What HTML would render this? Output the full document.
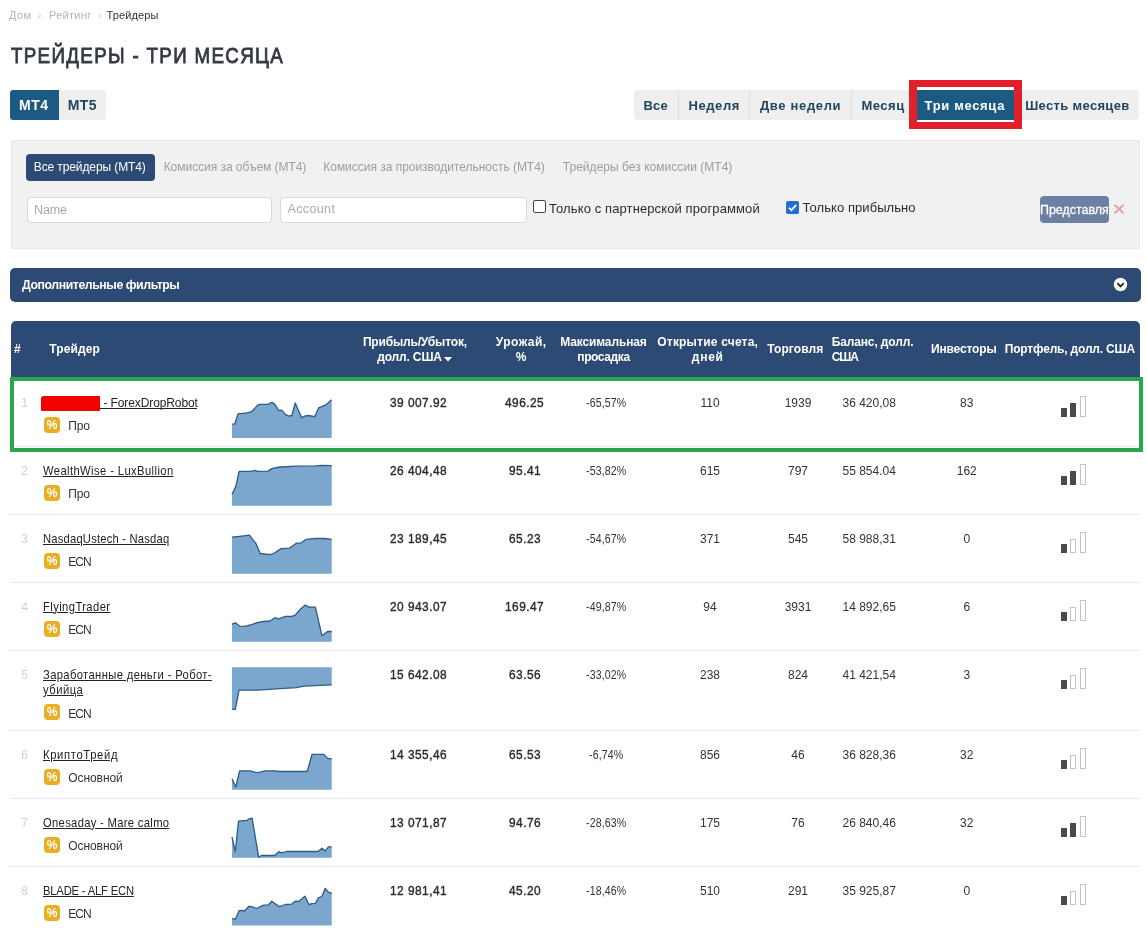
<!DOCTYPE html>
<html><head><meta charset="utf-8"><style>
html,body{margin:0;padding:0;background:#fff;width:1147px;height:932px;overflow:hidden;position:relative}
span{font-family:"Liberation Sans",sans-serif;white-space:pre}
#wrap{position:absolute;left:0;top:0;width:1147px;height:932px;will-change:transform;background:#fff}
</style></head><body><div id="wrap">
<div style="position:absolute;left:10px;top:90px;width:49px;height:30px;background:#1c5a81;border-radius:3px 0 0 3px"></div>
<div style="position:absolute;left:59px;top:90px;width:47px;height:30px;background:#efefef;border-radius:0 3px 3px 0"></div>
<div style="position:absolute;left:634px;top:90px;width:505px;height:29.5px;background:#efefef;border-radius:3px"></div>
<div style="position:absolute;left:678px;top:90px;width:1px;height:29.5px;background:#dfdfdf"></div>
<div style="position:absolute;left:749px;top:90px;width:1px;height:29.5px;background:#dfdfdf"></div>
<div style="position:absolute;left:851px;top:90px;width:1px;height:29.5px;background:#dfdfdf"></div>
<div style="position:absolute;left:913px;top:90px;width:1px;height:29.5px;background:#dfdfdf"></div>
<div style="position:absolute;left:909px;top:80px;width:113px;height:48.5px;background:#e2202b"></div>
<div style="position:absolute;left:917px;top:87px;width:97px;height:35px;background:#fff"></div>
<div style="position:absolute;left:917px;top:90px;width:97px;height:29.5px;background:#1c5a81"></div>
<div style="position:absolute;left:10.5px;top:139.5px;width:1129.0px;height:109.5px;background:#f1f1f1;border:1px solid #e9e9e9;box-sizing:border-box"></div>
<div style="position:absolute;left:26px;top:154px;width:129px;height:27px;background:#2c4a74;border-radius:4px"></div>
<div style="position:absolute;left:26.5px;top:196.5px;width:245.5px;height:26.0px;background:#fff;border:1px solid #d9d9d9;border-radius:4px;box-sizing:border-box"></div>
<div style="position:absolute;left:279.5px;top:196.5px;width:247.0px;height:26.0px;background:#fff;border:1px solid #d9d9d9;border-radius:4px;box-sizing:border-box"></div>
<div style="position:absolute;left:533px;top:199.7px;width:13px;height:13.0px;background:#fff;border:1px solid #444;border-radius:2px;box-sizing:border-box"></div>
<svg style="position:absolute;left:786px;top:201px" width="13" height="13" viewBox="0 0 13 13"><rect x="0" y="0" width="13" height="13" rx="2" fill="#1f6fd0"/><path d="M3 6.8 L5.4 9.2 L10.2 3.8" stroke="#fff" stroke-width="1.8" fill="none"/></svg>
<div style="position:absolute;left:1040px;top:196px;width:69px;height:26.5px;background:#6b80a2;border-radius:4px;overflow:hidden"><span style="position:absolute;left:-0.5px;top:6.5px;font-family:'Liberation Sans';font-size:13.5px;line-height:13.5px;color:#fff;white-space:nowrap;letter-spacing:0px;-webkit-text-stroke:0.3px #fff;transform:scaleX(0.92);transform-origin:0 0">Представлять</span></div>
<svg style="position:absolute;left:1113px;top:203px" width="12" height="12" viewBox="0 0 12 12"><path d="M1.5 1.8 L10.5 10.2 M10.5 1.8 L1.5 10.2" stroke="#dda5a5" stroke-width="1.9"/></svg>
<div style="position:absolute;left:9.5px;top:268px;width:1131.5px;height:33.5px;background:#2c4a74;border-radius:5px"></div>
<svg style="position:absolute;left:1113px;top:277.3px" width="15" height="15" viewBox="0 0 15 15"><circle cx="7.5" cy="7.5" r="6.7" fill="#fff"/><path d="M4.3 6.2 L7.5 9.4 L10.7 6.2" stroke="#1e2530" stroke-width="1.8" fill="none"/></svg>
<div style="position:absolute;left:10.5px;top:321px;width:1129.5px;height:57px;background:#2c4a73;border-radius:5px 5px 0 0"></div>
<svg style="position:absolute;left:444px;top:357px" width="8" height="5" viewBox="0 0 8 5"><path d="M0 0 L8 0 L4 4.6 Z" fill="#fff"/></svg>
<div style="position:absolute;left:41.3px;top:396.3px;width:58.7px;height:15.0px;background:#f50000;border-radius:3px 1px 1px 1px"></div>
<div style="position:absolute;left:100px;top:407.5px;width:97px;height:1.0px;background:#222"></div>
<div style="position:absolute;left:44px;top:416.5px;width:16px;height:16px;background:#e8ae24;border-radius:4px;color:#fff;font-family:'Liberation Sans';font-weight:bold;font-size:12px;line-height:16px;text-align:center">%</div>
<svg style="position:absolute;left:0;top:0" width="1147" height="932"><polygon points="232.0,437.9 232.0,424.2 234.7,424.2 238.0,413.9 247.2,412.8 251.6,411.7 257.6,405.2 259.8,404.4 268.0,404.4 271.8,402.4 275.0,404.6 278.8,410.6 281.6,410.1 285.4,414.4 288.7,416.1 291.9,415.5 295.2,403.0 301.7,417.7 304.5,416.1 308.3,415.5 314.8,416.6 318.6,407.9 322.4,406.3 326.3,404.6 331.7,399.7 331.7,437.9" fill="#7ba6cd"/><polyline points="232.0,424.2 234.7,424.2 238.0,413.9 247.2,412.8 251.6,411.7 257.6,405.2 259.8,404.4 268.0,404.4 271.8,402.4 275.0,404.6 278.8,410.6 281.6,410.1 285.4,414.4 288.7,416.1 291.9,415.5 295.2,403.0 301.7,417.7 304.5,416.1 308.3,415.5 314.8,416.6 318.6,407.9 322.4,406.3 326.3,404.6 331.7,399.7" fill="none" stroke="#2f5b85" stroke-width="1.3" stroke-linejoin="round"/></svg>
<div style="position:absolute;left:1061px;top:408px;width:6px;height:8.5px;background:#4a4a4a"></div>
<div style="position:absolute;left:1070px;top:402.5px;width:6px;height:14px;background:#4a4a4a"></div>
<div style="position:absolute;left:1079.5px;top:396px;width:6px;height:20.5px;border:1px solid #c4c4c4;box-sizing:border-box"></div>
<div style="position:absolute;left:10px;top:446px;width:1130px;height:1px;background:#e9e9e9"></div>
<div style="position:absolute;left:44px;top:484.5px;width:16px;height:16px;background:#e8ae24;border-radius:4px;color:#fff;font-family:'Liberation Sans';font-weight:bold;font-size:12px;line-height:16px;text-align:center">%</div>
<svg style="position:absolute;left:0;top:0" width="1147" height="932"><polygon points="232.0,505.7 232.0,494.2 235.8,486.6 239.1,471.3 251.6,471.3 254.9,470.3 257.6,471.3 268.0,471.1 271.8,468.6 279.9,467.0 296.3,466.2 315.9,465.9 321.4,465.4 331.7,465.6 331.7,505.7" fill="#7ba6cd"/><polyline points="232.0,494.2 235.8,486.6 239.1,471.3 251.6,471.3 254.9,470.3 257.6,471.3 268.0,471.1 271.8,468.6 279.9,467.0 296.3,466.2 315.9,465.9 321.4,465.4 331.7,465.6" fill="none" stroke="#2f5b85" stroke-width="1.3" stroke-linejoin="round"/></svg>
<div style="position:absolute;left:1061px;top:476px;width:6px;height:8.5px;background:#4a4a4a"></div>
<div style="position:absolute;left:1070px;top:470.5px;width:6px;height:14px;background:#4a4a4a"></div>
<div style="position:absolute;left:1079.5px;top:464px;width:6px;height:20.5px;border:1px solid #c4c4c4;box-sizing:border-box"></div>
<div style="position:absolute;left:10px;top:514px;width:1130px;height:1px;background:#e9e9e9"></div>
<div style="position:absolute;left:44px;top:552.5px;width:16px;height:16px;background:#e8ae24;border-radius:4px;color:#fff;font-family:'Liberation Sans';font-weight:bold;font-size:12px;line-height:16px;text-align:center">%</div>
<svg style="position:absolute;left:0;top:0" width="1147" height="932"><polygon points="232.0,573.7 232.0,537.2 241.8,536.1 249.4,535.2 256.0,543.7 260.3,553.5 270.1,554.6 274.5,553.0 281.0,548.6 289.7,548.1 296.3,543.2 300.6,543.2 306.1,539.3 315.9,538.3 324.6,538.5 331.7,539.3 331.7,573.7" fill="#7ba6cd"/><polyline points="232.0,537.2 241.8,536.1 249.4,535.2 256.0,543.7 260.3,553.5 270.1,554.6 274.5,553.0 281.0,548.6 289.7,548.1 296.3,543.2 300.6,543.2 306.1,539.3 315.9,538.3 324.6,538.5 331.7,539.3" fill="none" stroke="#2f5b85" stroke-width="1.3" stroke-linejoin="round"/></svg>
<div style="position:absolute;left:1061px;top:544px;width:6px;height:8.5px;background:#4a4a4a"></div>
<div style="position:absolute;left:1070px;top:538.5px;width:6px;height:14px;border:1px solid #c4c4c4;box-sizing:border-box"></div>
<div style="position:absolute;left:1079.5px;top:532px;width:6px;height:20.5px;border:1px solid #c4c4c4;box-sizing:border-box"></div>
<div style="position:absolute;left:10px;top:582px;width:1130px;height:1px;background:#e9e9e9"></div>
<div style="position:absolute;left:44px;top:620.5px;width:16px;height:16px;background:#e8ae24;border-radius:4px;color:#fff;font-family:'Liberation Sans';font-weight:bold;font-size:12px;line-height:16px;text-align:center">%</div>
<svg style="position:absolute;left:0;top:0" width="1147" height="932"><polygon points="232.0,641.7 232.0,624.2 235.3,622.8 239.6,626.1 245.1,626.4 250.5,625.0 257.1,622.6 263.6,621.5 270.1,621.0 275.0,617.7 278.8,618.8 285.4,616.3 291.9,616.3 295.2,615.2 300.6,609.0 305.0,605.2 309.4,607.1 315.4,607.1 321.9,635.7 327.9,631.3 331.7,631.5 331.7,641.7" fill="#7ba6cd"/><polyline points="232.0,624.2 235.3,622.8 239.6,626.1 245.1,626.4 250.5,625.0 257.1,622.6 263.6,621.5 270.1,621.0 275.0,617.7 278.8,618.8 285.4,616.3 291.9,616.3 295.2,615.2 300.6,609.0 305.0,605.2 309.4,607.1 315.4,607.1 321.9,635.7 327.9,631.3 331.7,631.5" fill="none" stroke="#2f5b85" stroke-width="1.3" stroke-linejoin="round"/></svg>
<div style="position:absolute;left:1061px;top:612px;width:6px;height:8.5px;background:#4a4a4a"></div>
<div style="position:absolute;left:1070px;top:606.5px;width:6px;height:14px;border:1px solid #c4c4c4;box-sizing:border-box"></div>
<div style="position:absolute;left:1079.5px;top:600px;width:6px;height:20.5px;border:1px solid #c4c4c4;box-sizing:border-box"></div>
<div style="position:absolute;left:10px;top:650px;width:1130px;height:1px;background:#e9e9e9"></div>
<div style="position:absolute;left:44px;top:704.2px;width:16px;height:16px;background:#e8ae24;border-radius:4px;color:#fff;font-family:'Liberation Sans';font-weight:bold;font-size:12px;line-height:16px;text-align:center">%</div>
<svg style="position:absolute;left:0;top:0" width="1147" height="932"><polygon points="232.0,667.2 232.0,709.3 235.3,709.3 239.1,690.1 258.1,690.1 279.9,688.6 296.3,687.6 303.9,686.2 320.3,685.4 331.7,684.9 331.7,667.2" fill="#7ba6cd"/><polyline points="232.0,709.3 235.3,709.3 239.1,690.1 258.1,690.1 279.9,688.6 296.3,687.6 303.9,686.2 320.3,685.4 331.7,684.9" fill="none" stroke="#2f5b85" stroke-width="1.3" stroke-linejoin="round"/></svg>
<div style="position:absolute;left:1061px;top:680px;width:6px;height:8.5px;background:#4a4a4a"></div>
<div style="position:absolute;left:1070px;top:674.5px;width:6px;height:14px;border:1px solid #c4c4c4;box-sizing:border-box"></div>
<div style="position:absolute;left:1079.5px;top:668px;width:6px;height:20.5px;border:1px solid #c4c4c4;box-sizing:border-box"></div>
<div style="position:absolute;left:10px;top:730px;width:1130px;height:1px;background:#e9e9e9"></div>
<div style="position:absolute;left:44px;top:768.5px;width:16px;height:16px;background:#e8ae24;border-radius:4px;color:#fff;font-family:'Liberation Sans';font-weight:bold;font-size:12px;line-height:16px;text-align:center">%</div>
<svg style="position:absolute;left:0;top:0" width="1147" height="932"><polygon points="232.0,789.7 232.0,778.8 235.8,787.0 239.6,770.8 250.5,770.8 256.0,772.6 260.3,772.2 264.7,770.8 274.5,770.8 279.9,771.5 307.2,771.5 312.1,754.3 323.5,754.3 327.9,758.6 331.7,758.6 331.7,789.7" fill="#7ba6cd"/><polyline points="232.0,778.8 235.8,787.0 239.6,770.8 250.5,770.8 256.0,772.6 260.3,772.2 264.7,770.8 274.5,770.8 279.9,771.5 307.2,771.5 312.1,754.3 323.5,754.3 327.9,758.6 331.7,758.6" fill="none" stroke="#2f5b85" stroke-width="1.3" stroke-linejoin="round"/></svg>
<div style="position:absolute;left:1061px;top:760px;width:6px;height:8.5px;background:#4a4a4a"></div>
<div style="position:absolute;left:1070px;top:754.5px;width:6px;height:14px;border:1px solid #c4c4c4;box-sizing:border-box"></div>
<div style="position:absolute;left:1079.5px;top:748px;width:6px;height:20.5px;border:1px solid #c4c4c4;box-sizing:border-box"></div>
<div style="position:absolute;left:10px;top:798px;width:1130px;height:1px;background:#e9e9e9"></div>
<div style="position:absolute;left:44px;top:836.5px;width:16px;height:16px;background:#e8ae24;border-radius:4px;color:#fff;font-family:'Liberation Sans';font-weight:bold;font-size:12px;line-height:16px;text-align:center">%</div>
<svg style="position:absolute;left:0;top:0" width="1147" height="932"><polygon points="232.0,857.7 232.0,837.0 235.3,851.7 238.5,821.2 247.2,820.3 248.9,819.0 252.1,818.1 258.7,857.3 261.4,855.5 274.5,855.5 278.8,851.7 282.1,852.8 286.5,851.5 318.1,851.5 321.9,848.2 325.2,851.1 328.4,846.8 331.7,846.8 331.7,857.7" fill="#7ba6cd"/><polyline points="232.0,837.0 235.3,851.7 238.5,821.2 247.2,820.3 248.9,819.0 252.1,818.1 258.7,857.3 261.4,855.5 274.5,855.5 278.8,851.7 282.1,852.8 286.5,851.5 318.1,851.5 321.9,848.2 325.2,851.1 328.4,846.8 331.7,846.8" fill="none" stroke="#2f5b85" stroke-width="1.3" stroke-linejoin="round"/></svg>
<div style="position:absolute;left:1061px;top:828px;width:6px;height:8.5px;background:#4a4a4a"></div>
<div style="position:absolute;left:1070px;top:822.5px;width:6px;height:14px;background:#4a4a4a"></div>
<div style="position:absolute;left:1079.5px;top:816px;width:6px;height:20.5px;border:1px solid #c4c4c4;box-sizing:border-box"></div>
<div style="position:absolute;left:10px;top:866px;width:1130px;height:1px;background:#e9e9e9"></div>
<div style="position:absolute;left:44px;top:904.5px;width:16px;height:16px;background:#e8ae24;border-radius:4px;color:#fff;font-family:'Liberation Sans';font-weight:bold;font-size:12px;line-height:16px;text-align:center">%</div>
<svg style="position:absolute;left:0;top:0" width="1147" height="932"><polygon points="232.0,925.6 232.0,918.3 235.3,919.4 239.1,910.7 241.8,910.4 244.5,911.0 248.9,906.3 251.6,906.7 256.5,908.5 263.6,905.2 268.0,905.2 271.8,901.2 279.4,906.7 285.4,904.5 291.9,904.1 295.2,901.2 298.5,901.4 305.0,896.2 308.8,904.5 312.1,903.6 315.4,903.4 318.6,897.6 321.9,896.5 325.2,888.3 328.4,892.2 331.7,893.3 331.7,925.6" fill="#7ba6cd"/><polyline points="232.0,918.3 235.3,919.4 239.1,910.7 241.8,910.4 244.5,911.0 248.9,906.3 251.6,906.7 256.5,908.5 263.6,905.2 268.0,905.2 271.8,901.2 279.4,906.7 285.4,904.5 291.9,904.1 295.2,901.2 298.5,901.4 305.0,896.2 308.8,904.5 312.1,903.6 315.4,903.4 318.6,897.6 321.9,896.5 325.2,888.3 328.4,892.2 331.7,893.3" fill="none" stroke="#2f5b85" stroke-width="1.3" stroke-linejoin="round"/></svg>
<div style="position:absolute;left:1061px;top:896px;width:6px;height:8.5px;background:#4a4a4a"></div>
<div style="position:absolute;left:1070px;top:890.5px;width:6px;height:14px;border:1px solid #c4c4c4;box-sizing:border-box"></div>
<div style="position:absolute;left:1079.5px;top:884px;width:6px;height:20.5px;border:1px solid #c4c4c4;box-sizing:border-box"></div>
<div style="position:absolute;left:9.5px;top:376.8px;width:1133.5px;height:75.69999999999999px;border:4.7px solid #2ba64b;border-bottom-width:4.5px;box-sizing:border-box"></div>
<span style="position:absolute;left:8.94px;top:9.89px;font-size:11px;line-height:11px;font-weight:normal;color:#b4b4b4;letter-spacing:0.485px;">Дом</span>
<span style="position:absolute;left:37.84px;top:9.89px;font-size:11px;line-height:11px;font-weight:normal;color:#c8c8c8;letter-spacing:1.148px;">›</span>
<span style="position:absolute;left:49.04px;top:9.89px;font-size:11px;line-height:11px;font-weight:normal;color:#b4b4b4;letter-spacing:0.276px;">Рейтинг</span>
<span style="position:absolute;left:97.84px;top:9.89px;font-size:11px;line-height:11px;font-weight:normal;color:#c8c8c8;letter-spacing:1.148px;">›</span>
<span style="position:absolute;left:106.54px;top:9.89px;font-size:11px;line-height:11px;font-weight:normal;color:#333;letter-spacing:0.109px;">Трейдеры</span>
<span style="position:absolute;left:10.69px;top:45.35px;font-size:21.8px;line-height:21.8px;font-weight:normal;color:#343a42;letter-spacing:1.552px;-webkit-text-stroke:0.85px #343a42;transform:scaleX(0.86);transform-origin:0 0">ТРЕЙДЕРЫ - ТРИ МЕСЯЦА</span>
<span style="position:absolute;left:19.06px;top:97.95px;font-size:14px;line-height:14px;font-weight:bold;color:#fff;letter-spacing:0.460px;">MT4</span>
<span style="position:absolute;left:67.66px;top:97.95px;font-size:14px;line-height:14px;font-weight:bold;color:#21465f;letter-spacing:0.493px;">MT5</span>
<span style="position:absolute;left:643.52px;top:99.00px;font-size:13px;line-height:13px;font-weight:bold;color:#21465f;letter-spacing:0.134px;">Все</span>
<span style="position:absolute;left:688.52px;top:99.00px;font-size:13px;line-height:13px;font-weight:bold;color:#21465f;letter-spacing:0.568px;">Неделя</span>
<span style="position:absolute;left:759.92px;top:99.00px;font-size:13px;line-height:13px;font-weight:bold;color:#21465f;letter-spacing:0.661px;">Две недели</span>
<span style="position:absolute;left:861.42px;top:99.00px;font-size:13px;line-height:13px;font-weight:bold;color:#21465f;letter-spacing:0.511px;">Месяц</span>
<span style="position:absolute;left:1025.22px;top:99.00px;font-size:13px;line-height:13px;font-weight:bold;color:#21465f;letter-spacing:0.333px;">Шесть месяцев</span>
<span style="position:absolute;left:924.52px;top:99.00px;font-size:13px;line-height:13px;font-weight:bold;color:#fff;letter-spacing:0.669px;">Три месяца</span>
<span style="position:absolute;left:33.78px;top:161.14px;font-size:12px;line-height:12px;font-weight:normal;color:#fff;letter-spacing:-0.107px;">Все трейдеры (MT4)</span>
<span style="position:absolute;left:163.68px;top:160.54px;font-size:12px;line-height:12px;font-weight:normal;color:#9d9d9d;letter-spacing:-0.040px;">Комиссия за объем (MT4)</span>
<span style="position:absolute;left:323.28px;top:160.54px;font-size:12px;line-height:12px;font-weight:normal;color:#9d9d9d;letter-spacing:-0.022px;">Комиссия за производительность (MT4)</span>
<span style="position:absolute;left:562.78px;top:160.54px;font-size:12px;line-height:12px;font-weight:normal;color:#9d9d9d;letter-spacing:0.033px;">Трейдеры без комиссии (MT4)</span>
<span style="position:absolute;left:34.05px;top:203.52px;font-size:12.5px;line-height:12.5px;font-weight:normal;color:#a8a8a8;letter-spacing:-0.161px;">Name</span>
<span style="position:absolute;left:287.45px;top:203.42px;font-size:12.5px;line-height:12.5px;font-weight:normal;color:#a8a8a8;letter-spacing:0.375px;">Account</span>
<span style="position:absolute;left:549.02px;top:201.70px;font-size:13px;line-height:13px;font-weight:normal;color:#2b2b2b;letter-spacing:0.111px;">Только с партнерской программой</span>
<span style="position:absolute;left:802.52px;top:200.60px;font-size:13px;line-height:13px;font-weight:normal;color:#2b2b2b;letter-spacing:0.073px;">Только прибыльно</span>
<span style="position:absolute;left:21.96px;top:279.19px;font-size:12.3px;line-height:12.3px;font-weight:bold;color:#fff;letter-spacing:-0.429px;">Дополнительные фильтры</span>
<span style="position:absolute;left:14.08px;top:343.44px;font-size:12px;line-height:12px;font-weight:bold;color:#fff;letter-spacing:1.752px;">#</span>
<span style="position:absolute;left:49.28px;top:343.44px;font-size:12px;line-height:12px;font-weight:bold;color:#fff;letter-spacing:0.109px;">Трейдер</span>
<span style="position:absolute;left:362.88px;top:336.24px;font-size:12px;line-height:12px;font-weight:bold;color:#fff;letter-spacing:-0.167px;">Прибыль/Убыток,</span>
<span style="position:absolute;left:377.18px;top:351.34px;font-size:12px;line-height:12px;font-weight:bold;color:#fff;letter-spacing:-0.146px;">долл. США</span>
<span style="position:absolute;left:495.78px;top:336.24px;font-size:12px;line-height:12px;font-weight:bold;color:#fff;letter-spacing:0.468px;">Урожай,</span>
<span style="position:absolute;left:515.78px;top:351.34px;font-size:12px;line-height:12px;font-weight:bold;color:#fff;letter-spacing:0.268px;">%</span>
<span style="position:absolute;left:560.18px;top:336.24px;font-size:12px;line-height:12px;font-weight:bold;color:#fff;letter-spacing:-0.124px;">Максимальная</span>
<span style="position:absolute;left:577.28px;top:351.34px;font-size:12px;line-height:12px;font-weight:bold;color:#fff;letter-spacing:-0.388px;">просадка</span>
<span style="position:absolute;left:657.28px;top:336.24px;font-size:12px;line-height:12px;font-weight:bold;color:#fff;letter-spacing:0.203px;">Открытие счета,</span>
<span style="position:absolute;left:691.78px;top:351.34px;font-size:12px;line-height:12px;font-weight:bold;color:#fff;letter-spacing:0.755px;">дней</span>
<span style="position:absolute;left:767.28px;top:343.44px;font-size:12px;line-height:12px;font-weight:bold;color:#fff;letter-spacing:0.111px;">Торговля</span>
<span style="position:absolute;left:831.68px;top:336.24px;font-size:12px;line-height:12px;font-weight:bold;color:#fff;letter-spacing:-0.129px;">Баланс, долл.</span>
<span style="position:absolute;left:831.68px;top:351.34px;font-size:12px;line-height:12px;font-weight:bold;color:#fff;letter-spacing:-1.117px;">США</span>
<span style="position:absolute;left:930.98px;top:343.44px;font-size:12px;line-height:12px;font-weight:bold;color:#fff;letter-spacing:-0.154px;">Инвесторы</span>
<span style="position:absolute;left:1004.78px;top:343.44px;font-size:12px;line-height:12px;font-weight:bold;color:#fff;letter-spacing:-0.184px;">Портфель, долл. США</span>
<span style="position:absolute;left:21.28px;top:396.84px;font-size:12px;line-height:12px;font-weight:normal;color:#d0d0d0;letter-spacing:-0.248px;">1</span>
<span style="position:absolute;left:103.48px;top:396.84px;font-size:12px;line-height:12px;font-weight:normal;color:#222;letter-spacing:-0.107px;">- ForexDropRobot</span>
<span style="position:absolute;left:68.28px;top:420.34px;font-size:12px;line-height:12px;font-weight:normal;color:#333;letter-spacing:-0.181px;">Про</span>
<span style="position:absolute;left:389.93px;top:396.96px;font-size:12.8px;line-height:12.8px;font-weight:normal;color:#2b2b2b;letter-spacing:0.500px;-webkit-text-stroke:0.38px #2b2b2b;transform:scaleX(0.93);transform-origin:0 0">39 007.92</span>
<span style="position:absolute;left:505.10px;top:396.96px;font-size:12.8px;line-height:12.8px;font-weight:normal;color:#2b2b2b;letter-spacing:0.500px;-webkit-text-stroke:0.38px #2b2b2b;transform:scaleX(0.93);transform-origin:0 0">496.25</span>
<span style="position:absolute;left:585.87px;top:397.14px;font-size:12px;line-height:12px;font-weight:normal;color:#333;letter-spacing:0.150px;;transform:scaleX(0.88);transform-origin:0 0">-65,57%</span>
<span style="position:absolute;left:700.43px;top:396.84px;font-size:12px;line-height:12px;font-weight:normal;color:#333;letter-spacing:0.000px;">110</span>
<span style="position:absolute;left:784.65px;top:396.84px;font-size:12px;line-height:12px;font-weight:normal;color:#333;letter-spacing:0.000px;">1939</span>
<span style="position:absolute;left:842.48px;top:396.84px;font-size:12px;line-height:12px;font-weight:normal;color:#333;letter-spacing:0.000px;">36 420,08</span>
<span style="position:absolute;left:960.12px;top:396.84px;font-size:12px;line-height:12px;font-weight:normal;color:#333;letter-spacing:0.000px;">83</span>
<span style="position:absolute;left:21.28px;top:464.84px;font-size:12px;line-height:12px;font-weight:normal;color:#d0d0d0;letter-spacing:-0.248px;">2</span>
<span style="position:absolute;left:43.47px;top:464.67px;font-size:12.2px;line-height:12.2px;font-weight:normal;color:#222;letter-spacing:0.437px;text-decoration:underline;text-underline-offset:1px;transform:scaleX(0.92);transform-origin:0 0">WealthWise - LuxBullion</span>
<span style="position:absolute;left:68.28px;top:488.34px;font-size:12px;line-height:12px;font-weight:normal;color:#333;letter-spacing:-0.181px;">Про</span>
<span style="position:absolute;left:389.93px;top:464.96px;font-size:12.8px;line-height:12.8px;font-weight:normal;color:#2b2b2b;letter-spacing:0.500px;-webkit-text-stroke:0.38px #2b2b2b;transform:scaleX(0.93);transform-origin:0 0">26 404,48</span>
<span style="position:absolute;left:508.64px;top:464.96px;font-size:12.8px;line-height:12.8px;font-weight:normal;color:#2b2b2b;letter-spacing:0.500px;-webkit-text-stroke:0.38px #2b2b2b;transform:scaleX(0.93);transform-origin:0 0">95.41</span>
<span style="position:absolute;left:585.87px;top:465.14px;font-size:12px;line-height:12px;font-weight:normal;color:#333;letter-spacing:0.150px;;transform:scaleX(0.88);transform-origin:0 0">-53,82%</span>
<span style="position:absolute;left:699.98px;top:464.84px;font-size:12px;line-height:12px;font-weight:normal;color:#333;letter-spacing:0.000px;">615</span>
<span style="position:absolute;left:787.98px;top:464.84px;font-size:12px;line-height:12px;font-weight:normal;color:#333;letter-spacing:0.000px;">797</span>
<span style="position:absolute;left:842.48px;top:464.84px;font-size:12px;line-height:12px;font-weight:normal;color:#333;letter-spacing:0.000px;">55 854.04</span>
<span style="position:absolute;left:956.78px;top:464.84px;font-size:12px;line-height:12px;font-weight:normal;color:#333;letter-spacing:0.000px;">162</span>
<span style="position:absolute;left:21.28px;top:532.84px;font-size:12px;line-height:12px;font-weight:normal;color:#d0d0d0;letter-spacing:-0.248px;">3</span>
<span style="position:absolute;left:43.47px;top:532.67px;font-size:12.2px;line-height:12.2px;font-weight:normal;color:#222;letter-spacing:0.218px;text-decoration:underline;text-underline-offset:1px;transform:scaleX(0.92);transform-origin:0 0">NasdaqUstech - Nasdaq</span>
<span style="position:absolute;left:68.28px;top:556.34px;font-size:12px;line-height:12px;font-weight:normal;color:#333;letter-spacing:-0.968px;">ECN</span>
<span style="position:absolute;left:389.93px;top:532.96px;font-size:12.8px;line-height:12.8px;font-weight:normal;color:#2b2b2b;letter-spacing:0.500px;-webkit-text-stroke:0.38px #2b2b2b;transform:scaleX(0.93);transform-origin:0 0">23 189,45</span>
<span style="position:absolute;left:508.64px;top:532.96px;font-size:12.8px;line-height:12.8px;font-weight:normal;color:#2b2b2b;letter-spacing:0.500px;-webkit-text-stroke:0.38px #2b2b2b;transform:scaleX(0.93);transform-origin:0 0">65.23</span>
<span style="position:absolute;left:585.87px;top:533.14px;font-size:12px;line-height:12px;font-weight:normal;color:#333;letter-spacing:0.150px;;transform:scaleX(0.88);transform-origin:0 0">-54,67%</span>
<span style="position:absolute;left:699.98px;top:532.84px;font-size:12px;line-height:12px;font-weight:normal;color:#333;letter-spacing:0.000px;">371</span>
<span style="position:absolute;left:787.98px;top:532.84px;font-size:12px;line-height:12px;font-weight:normal;color:#333;letter-spacing:0.000px;">545</span>
<span style="position:absolute;left:842.48px;top:532.84px;font-size:12px;line-height:12px;font-weight:normal;color:#333;letter-spacing:0.000px;">58 988,31</span>
<span style="position:absolute;left:963.46px;top:532.84px;font-size:12px;line-height:12px;font-weight:normal;color:#333;letter-spacing:0.000px;">0</span>
<span style="position:absolute;left:21.28px;top:600.84px;font-size:12px;line-height:12px;font-weight:normal;color:#d0d0d0;letter-spacing:-0.248px;">4</span>
<span style="position:absolute;left:43.47px;top:600.67px;font-size:12.2px;line-height:12.2px;font-weight:normal;color:#222;letter-spacing:0.447px;text-decoration:underline;text-underline-offset:1px;transform:scaleX(0.92);transform-origin:0 0">FlyingTrader</span>
<span style="position:absolute;left:68.28px;top:624.34px;font-size:12px;line-height:12px;font-weight:normal;color:#333;letter-spacing:-0.968px;">ECN</span>
<span style="position:absolute;left:389.93px;top:600.96px;font-size:12.8px;line-height:12.8px;font-weight:normal;color:#2b2b2b;letter-spacing:0.500px;-webkit-text-stroke:0.38px #2b2b2b;transform:scaleX(0.93);transform-origin:0 0">20 943.07</span>
<span style="position:absolute;left:505.10px;top:600.96px;font-size:12.8px;line-height:12.8px;font-weight:normal;color:#2b2b2b;letter-spacing:0.500px;-webkit-text-stroke:0.38px #2b2b2b;transform:scaleX(0.93);transform-origin:0 0">169.47</span>
<span style="position:absolute;left:585.87px;top:601.14px;font-size:12px;line-height:12px;font-weight:normal;color:#333;letter-spacing:0.150px;;transform:scaleX(0.88);transform-origin:0 0">-49,87%</span>
<span style="position:absolute;left:703.32px;top:600.84px;font-size:12px;line-height:12px;font-weight:normal;color:#333;letter-spacing:0.000px;">94</span>
<span style="position:absolute;left:784.65px;top:600.84px;font-size:12px;line-height:12px;font-weight:normal;color:#333;letter-spacing:0.000px;">3931</span>
<span style="position:absolute;left:842.48px;top:600.84px;font-size:12px;line-height:12px;font-weight:normal;color:#333;letter-spacing:0.000px;">14 892,65</span>
<span style="position:absolute;left:963.46px;top:600.84px;font-size:12px;line-height:12px;font-weight:normal;color:#333;letter-spacing:0.000px;">6</span>
<span style="position:absolute;left:21.28px;top:668.84px;font-size:12px;line-height:12px;font-weight:normal;color:#d0d0d0;letter-spacing:-0.248px;">5</span>
<span style="position:absolute;left:43.47px;top:668.67px;font-size:12.2px;line-height:12.2px;font-weight:normal;color:#222;letter-spacing:0.403px;text-decoration:underline;text-underline-offset:1px;transform:scaleX(0.92);transform-origin:0 0">Заработанные деньги - Робот-</span>
<span style="position:absolute;left:43.47px;top:684.37px;font-size:12.2px;line-height:12.2px;font-weight:normal;color:#222;letter-spacing:0.529px;text-decoration:underline;text-underline-offset:1px;transform:scaleX(0.92);transform-origin:0 0">убийца</span>
<span style="position:absolute;left:68.28px;top:708.04px;font-size:12px;line-height:12px;font-weight:normal;color:#333;letter-spacing:-0.968px;">ECN</span>
<span style="position:absolute;left:389.93px;top:668.96px;font-size:12.8px;line-height:12.8px;font-weight:normal;color:#2b2b2b;letter-spacing:0.500px;-webkit-text-stroke:0.38px #2b2b2b;transform:scaleX(0.93);transform-origin:0 0">15 642.08</span>
<span style="position:absolute;left:508.64px;top:668.96px;font-size:12.8px;line-height:12.8px;font-weight:normal;color:#2b2b2b;letter-spacing:0.500px;-webkit-text-stroke:0.38px #2b2b2b;transform:scaleX(0.93);transform-origin:0 0">63.56</span>
<span style="position:absolute;left:585.87px;top:669.14px;font-size:12px;line-height:12px;font-weight:normal;color:#333;letter-spacing:0.150px;;transform:scaleX(0.88);transform-origin:0 0">-33,02%</span>
<span style="position:absolute;left:699.98px;top:668.84px;font-size:12px;line-height:12px;font-weight:normal;color:#333;letter-spacing:0.000px;">238</span>
<span style="position:absolute;left:787.98px;top:668.84px;font-size:12px;line-height:12px;font-weight:normal;color:#333;letter-spacing:0.000px;">824</span>
<span style="position:absolute;left:842.48px;top:668.84px;font-size:12px;line-height:12px;font-weight:normal;color:#333;letter-spacing:0.000px;">41 421,54</span>
<span style="position:absolute;left:963.46px;top:668.84px;font-size:12px;line-height:12px;font-weight:normal;color:#333;letter-spacing:0.000px;">3</span>
<span style="position:absolute;left:21.28px;top:748.84px;font-size:12px;line-height:12px;font-weight:normal;color:#d0d0d0;letter-spacing:-0.248px;">6</span>
<span style="position:absolute;left:43.47px;top:748.67px;font-size:12.2px;line-height:12.2px;font-weight:normal;color:#222;letter-spacing:0.723px;text-decoration:underline;text-underline-offset:1px;transform:scaleX(0.92);transform-origin:0 0">КриптоТрейд</span>
<span style="position:absolute;left:68.28px;top:772.34px;font-size:12px;line-height:12px;font-weight:normal;color:#333;letter-spacing:-0.072px;">Основной</span>
<span style="position:absolute;left:389.93px;top:748.96px;font-size:12.8px;line-height:12.8px;font-weight:normal;color:#2b2b2b;letter-spacing:0.500px;-webkit-text-stroke:0.38px #2b2b2b;transform:scaleX(0.93);transform-origin:0 0">14 355,46</span>
<span style="position:absolute;left:508.64px;top:748.96px;font-size:12.8px;line-height:12.8px;font-weight:normal;color:#2b2b2b;letter-spacing:0.500px;-webkit-text-stroke:0.38px #2b2b2b;transform:scaleX(0.93);transform-origin:0 0">65.53</span>
<span style="position:absolute;left:588.87px;top:749.14px;font-size:12px;line-height:12px;font-weight:normal;color:#333;letter-spacing:0.150px;;transform:scaleX(0.88);transform-origin:0 0">-6,74%</span>
<span style="position:absolute;left:699.98px;top:748.84px;font-size:12px;line-height:12px;font-weight:normal;color:#333;letter-spacing:0.000px;">856</span>
<span style="position:absolute;left:791.32px;top:748.84px;font-size:12px;line-height:12px;font-weight:normal;color:#333;letter-spacing:0.000px;">46</span>
<span style="position:absolute;left:842.48px;top:748.84px;font-size:12px;line-height:12px;font-weight:normal;color:#333;letter-spacing:0.000px;">36 828,36</span>
<span style="position:absolute;left:960.12px;top:748.84px;font-size:12px;line-height:12px;font-weight:normal;color:#333;letter-spacing:0.000px;">32</span>
<span style="position:absolute;left:21.28px;top:816.84px;font-size:12px;line-height:12px;font-weight:normal;color:#d0d0d0;letter-spacing:-0.248px;">7</span>
<span style="position:absolute;left:43.47px;top:816.67px;font-size:12.2px;line-height:12.2px;font-weight:normal;color:#222;letter-spacing:0.347px;text-decoration:underline;text-underline-offset:1px;transform:scaleX(0.92);transform-origin:0 0">Onesaday - Mare calmo</span>
<span style="position:absolute;left:68.28px;top:840.34px;font-size:12px;line-height:12px;font-weight:normal;color:#333;letter-spacing:-0.072px;">Основной</span>
<span style="position:absolute;left:389.93px;top:816.96px;font-size:12.8px;line-height:12.8px;font-weight:normal;color:#2b2b2b;letter-spacing:0.500px;-webkit-text-stroke:0.38px #2b2b2b;transform:scaleX(0.93);transform-origin:0 0">13 071,87</span>
<span style="position:absolute;left:508.64px;top:816.96px;font-size:12.8px;line-height:12.8px;font-weight:normal;color:#2b2b2b;letter-spacing:0.500px;-webkit-text-stroke:0.38px #2b2b2b;transform:scaleX(0.93);transform-origin:0 0">94.76</span>
<span style="position:absolute;left:585.87px;top:817.14px;font-size:12px;line-height:12px;font-weight:normal;color:#333;letter-spacing:0.150px;;transform:scaleX(0.88);transform-origin:0 0">-28,63%</span>
<span style="position:absolute;left:699.98px;top:816.84px;font-size:12px;line-height:12px;font-weight:normal;color:#333;letter-spacing:0.000px;">175</span>
<span style="position:absolute;left:791.32px;top:816.84px;font-size:12px;line-height:12px;font-weight:normal;color:#333;letter-spacing:0.000px;">76</span>
<span style="position:absolute;left:842.48px;top:816.84px;font-size:12px;line-height:12px;font-weight:normal;color:#333;letter-spacing:0.000px;">26 840,46</span>
<span style="position:absolute;left:960.12px;top:816.84px;font-size:12px;line-height:12px;font-weight:normal;color:#333;letter-spacing:0.000px;">32</span>
<span style="position:absolute;left:21.28px;top:884.84px;font-size:12px;line-height:12px;font-weight:normal;color:#d0d0d0;letter-spacing:-0.248px;">8</span>
<span style="position:absolute;left:43.47px;top:884.67px;font-size:12.2px;line-height:12.2px;font-weight:normal;color:#222;letter-spacing:-0.189px;text-decoration:underline;text-underline-offset:1px;transform:scaleX(0.92);transform-origin:0 0">BLADE - ALF ECN</span>
<span style="position:absolute;left:68.28px;top:908.34px;font-size:12px;line-height:12px;font-weight:normal;color:#333;letter-spacing:-0.968px;">ECN</span>
<span style="position:absolute;left:389.93px;top:884.96px;font-size:12.8px;line-height:12.8px;font-weight:normal;color:#2b2b2b;letter-spacing:0.500px;-webkit-text-stroke:0.38px #2b2b2b;transform:scaleX(0.93);transform-origin:0 0">12 981,41</span>
<span style="position:absolute;left:508.64px;top:884.96px;font-size:12.8px;line-height:12.8px;font-weight:normal;color:#2b2b2b;letter-spacing:0.500px;-webkit-text-stroke:0.38px #2b2b2b;transform:scaleX(0.93);transform-origin:0 0">45.20</span>
<span style="position:absolute;left:585.87px;top:885.14px;font-size:12px;line-height:12px;font-weight:normal;color:#333;letter-spacing:0.150px;;transform:scaleX(0.88);transform-origin:0 0">-18,46%</span>
<span style="position:absolute;left:699.98px;top:884.84px;font-size:12px;line-height:12px;font-weight:normal;color:#333;letter-spacing:0.000px;">510</span>
<span style="position:absolute;left:787.98px;top:884.84px;font-size:12px;line-height:12px;font-weight:normal;color:#333;letter-spacing:0.000px;">291</span>
<span style="position:absolute;left:842.48px;top:884.84px;font-size:12px;line-height:12px;font-weight:normal;color:#333;letter-spacing:0.000px;">35 925,87</span>
<span style="position:absolute;left:963.46px;top:884.84px;font-size:12px;line-height:12px;font-weight:normal;color:#333;letter-spacing:0.000px;">0</span>
</div></body></html>
